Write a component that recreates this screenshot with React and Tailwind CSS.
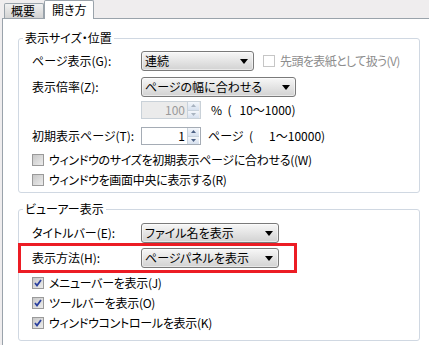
import React from 'react';

const font = "font-['Noto_Sans_CJK_JP','Noto_Sans',sans-serif] [font-feature-settings:'palt'] text-[12px] leading-[16px]";

function Dropdown({ value, width }) {
  return (
    <div
      className={`${width} h-[20px] flex items-center justify-between pl-[3px] pr-[5px] border border-[#7a7a7a] rounded-[3px] bg-linear-to-b from-[#f7f7f7] to-[#d2d2d2] shadow-[inset_0_0_0_1px_#ffffff80]`}
    >
      <span className="whitespace-nowrap">{value}</span>
      <svg width="8" height="5" viewBox="0 0 8 5">
        <path d="M0 0 H8 L4 5 Z" fill="#000" />
      </svg>
    </div>
  );
}

function Spinner({ value, disabled }) {
  return (
    <div
      className={`w-[60px] h-[18px] flex items-center justify-end border ${disabled ? 'border-[#c9d1d8] bg-[#ebebeb] text-[#9a9a9a]' : 'border-[#a5acb5] bg-white'}`}
    >
      <span className="pr-[2px]">{value}</span>
      <div className="flex flex-col w-[12px] h-[16px] mr-[1px] border-l border-[#c8d2dc]">
        <div className="flex-1 flex items-center justify-center bg-linear-to-b from-[#f4f7fb] to-[#d6e0ee]">
          <svg width="5" height="3" viewBox="0 0 5 3"><path d="M0 3 L2.5 0 L5 3 Z" fill={disabled ? '#a8b3c0' : '#4d6185'} /></svg>
        </div>
        <div className="flex-1 flex items-center justify-center bg-linear-to-b from-[#f4f7fb] to-[#d6e0ee] border-t border-[#c8d2dc]">
          <svg width="5" height="3" viewBox="0 0 5 3"><path d="M0 0 L2.5 3 L5 0 Z" fill={disabled ? '#a8b3c0' : '#4d6185'} /></svg>
        </div>
      </div>
    </div>
  );
}

function Check({ checked, light }) {
  return (
    <div
      className={`w-[12px] h-[12px] shrink-0 flex items-center justify-center border ${light ? 'border-[#c6c6c6] bg-white' : 'border-[#9a9a9a] bg-linear-to-br from-[#c8c8c8] to-[#ececec]'}`}
    >
      {checked && (
        <svg width="8" height="8" viewBox="0 0 8 8">
          <path d="M1 4 L3 6.5 L7 1" stroke="#2a3f9e" strokeWidth="1.8" fill="none" />
        </svg>
      )}
    </div>
  );
}

function CheckRow({ label, checked, className = '' }) {
  return (
    <div className={`h-[20px] flex items-center gap-[5px] ${className}`}>
      <Check checked={checked} />
      <span className="whitespace-nowrap tracking-[-0.3px]">{label}</span>
    </div>
  );
}

function Group({ title, className = '', children }) {
  return (
    <fieldset className={`w-[402px] border border-[#d0d8e2] rounded-[3px] ${className}`}>
      <legend className="ml-[4px] px-[2px] h-[16px]">{title}</legend>
      {children}
    </fieldset>
  );
}

export default function App() {
  return (
    <div className={`w-[429px] h-[345px] overflow-hidden bg-[#efedee] text-black flex flex-col ${font}`}>
      {/* tabs */}
      <div className="h-[18px] flex items-end pl-[4px] shrink-0">
        <div className="w-[40px] h-[15px] flex items-center pl-[6px] border border-b-0 border-[#9aa3ab] rounded-t-[2px] bg-linear-to-b from-[#f0f0f0] to-[#d3d3d3]">
          概要
        </div>
        <div className="w-[50px] h-[19px] -mb-px relative flex items-center pl-[7px] border border-b-0 border-[#9aa3ab] rounded-t-[2px] bg-white">
          開き方
        </div>
      </div>

      {/* page */}
      <div className="ml-[2px] flex-1 border-l border-t border-[#9aa3ab] bg-white pl-[15px]">
        <Group title="表示サイズ・位置" className="mt-[11px] pb-[2px]">
          <div className="pl-[13px] pt-[5px]">
            <div className="h-[20px] flex items-center">
              <span className="w-[109px]">ページ表示(G):</span>
              <Dropdown value="連続" width="w-[113px]" />
              <div className="ml-[9px] flex items-center gap-[5px] text-[#8d8d8d]">
                <Check light />
                <span className="whitespace-nowrap tracking-[-0.6px]">先頭を表紙として扱う(V)</span>
              </div>
            </div>
            <div className="h-[20px] mt-[6px] flex items-center">
              <span className="w-[109px]">表示倍率(Z):</span>
              <Dropdown value="ページの幅に合わせる" width="w-[155px]" />
            </div>
            <div className="h-[18px] mt-[4px] flex items-center">
              <span className="w-[109px]" />
              <Spinner value="100" disabled />
              <span className="ml-[10px] whitespace-pre">%  (   10〜1000)</span>
            </div>
            <div className="h-[18px] mt-[8px] flex items-center">
              <span className="w-[109px]">初期表示ページ(T):</span>
              <Spinner value="1" />
              <span className="ml-[7px] whitespace-pre">ページ  (      1〜10000)</span>
            </div>
            <CheckRow className="mt-[5px]" label="ウィンドウのサイズを初期表示ページに合わせる((W)" />
            <CheckRow label="ウィンドウを画面中央に表示する(R)" />
          </div>
        </Group>

        <Group title="ビューアー表示" className="mt-[8px] pb-[7px]">
          <div className="pl-[13px] pt-[6px]">
            <div className="h-[20px] flex items-center">
              <span className="w-[109px]">タイトルバー(E):</span>
              <Dropdown value="ファイル名を表示" width="w-[138px]" />
            </div>
            <div className="-ml-[14px] w-[279px] h-[30px] border-[3px] border-[#ec1c24] flex items-center pl-[11px]">
              <span className="w-[109px]">表示方法(H):</span>
              <Dropdown value="ページパネルを表示" width="w-[138px]" />
            </div>
            <CheckRow checked label="メニューバーを表示(J)" />
            <CheckRow checked label="ツールバーを表示(O)" />
            <CheckRow checked label="ウィンドウコントロールを表示(K)" />
          </div>
        </Group>
      </div>
    </div>
  );
}
